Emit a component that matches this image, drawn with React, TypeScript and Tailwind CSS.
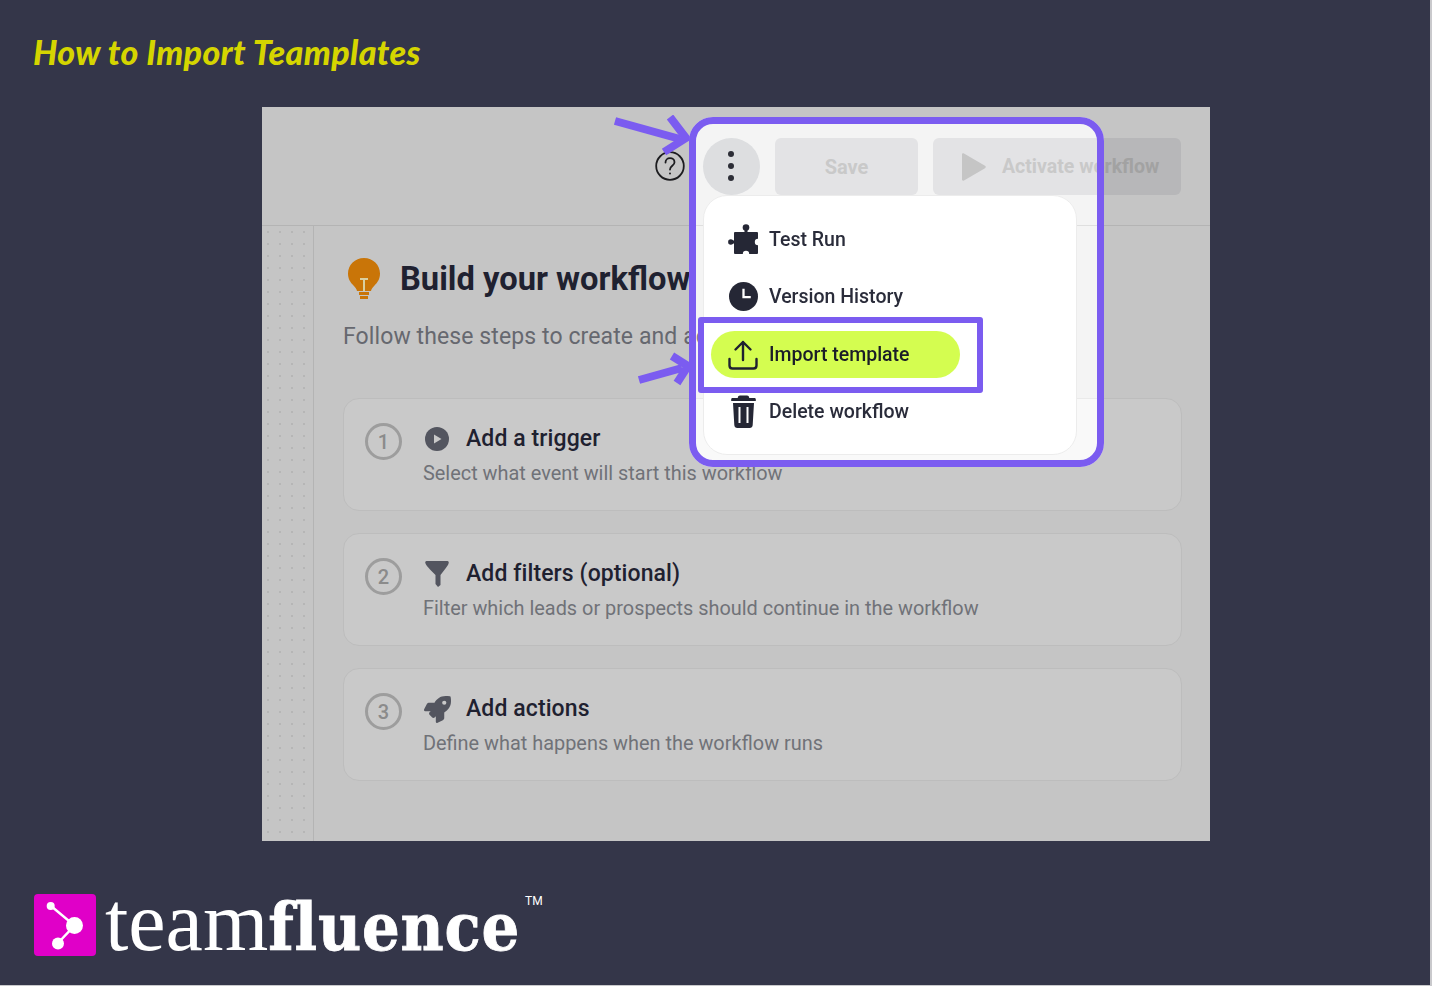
import { FaRocket } from "react-icons/fa";

const steps = [
  { n: 1, title: "Add a trigger", desc: "Select what event will start this workflow", icon: <PlayDot /> },
  { n: 2, title: "Add filters (optional)", desc: "Filter which leads or prospects should continue in the workflow", icon: <Funnel /> },
  { n: 3, title: "Add actions", desc: "Define what happens when the workflow runs", icon: <FaRocket className="ml-[1px] h-[27px] w-[27px] text-[#53555f]" /> },
];

function PlayDot() {
  return (
    <svg viewBox="0 0 24 24" className="ml-[2px] h-[24px] w-[24px]">
      <circle cx="12" cy="12" r="12" fill="#53555f" />
      <path d="M9 7.500v9l7.500-4.500z" fill="#c9c9c9" />
    </svg>
  );
}

function Funnel() {
  return (
    <svg viewBox="0 0 24 26" className="ml-[2px] h-[26px] w-[24px]">
      <path d="M1.500 0h21c1 0 1.500 1 1.200 2-.5 2-1.700 3.500-3.200 5.500l-5 6.500v10l-2.500 2-2.500-3v-9L5 8.500C2.500 5.500 1 4 .3 2 0 1 .5 0 1.500 0z" fill="#53555f" />
    </svg>
  );
}

function Bulb() {
  return (
    <svg viewBox="0 0 32 42" className="mt-[2px] h-[42px] w-[32px]">
      <path d="M16 0C7 0 0 7 0 15.500c0 5.500 2.500 9 5.500 12 2 2 3 3.500 3.500 5.500h14c.5-2 1.500-3.500 3.500-5.500 3-3 5.500-6.500 5.500-12C32 7 25 0 16 0z" fill="#c97508" />
      <path d="M12 21h8M16 21v12" stroke="#d9cfa0" strokeWidth="2" fill="none" />
      <path d="M11 35.500h10M12 39.500h8" stroke="#c97508" strokeWidth="3" fill="none" />
    </svg>
  );
}

function Puzzle() {
  return (
    <svg viewBox="0 0 32 32" className="h-[32px] w-[32px]">
      <rect x="6" y="8" width="24" height="22" rx="1" fill="#252735" />
      <rect x="16.500" y="4" width="3" height="6" fill="#252735" />
      <circle cx="18" cy="3.500" r="3.300" fill="#252735" />
      <rect x="3" y="16.500" width="5" height="3" fill="#252735" />
      <circle cx="2.800" cy="18" r="2.700" fill="#252735" />
      <circle cx="30" cy="18" r="3.200" fill="#fff" />
      <circle cx="18" cy="30" r="3.200" fill="#fff" />
    </svg>
  );
}

function ClockFill() {
  return (
    <svg viewBox="0 0 28 28" className="h-[29px] w-[29px]">
      <circle cx="14" cy="14" r="14" fill="#252735" />
      <path d="M14 6.500V14.500H21" stroke="#fff" strokeWidth="2.200" fill="none" />
    </svg>
  );
}

function UploadIcon() {
  return (
    <svg viewBox="0 0 30 30" className="h-[30px] w-[30px]" fill="none" stroke="#1f2130" strokeWidth="2.400" strokeLinecap="round" strokeLinejoin="round">
      <path d="M15 20V2M7.500 9.500 15 2l7.500 7.500" />
      <path d="M1.500 19v6.500c0 1.700 1.300 3 3 3h21c1.700 0 3-1.300 3-3V19" />
    </svg>
  );
}

function Trash() {
  return (
    <svg viewBox="0 0 25 33" className="h-[33px] w-[25px]">
      <path d="M9 .5h7c1.300 0 2 .8 2.300 2.500h5.200c.8 0 1.300.6 1.300 1.300V6H.2V4.300C.2 3.600.7 3 1.500 3h5.200C7 1.300 7.700.5 9 .5z" fill="#252735" />
      <path d="M2 8h21l-1.300 22c-.1 1.700-1.300 3-3 3H6.300c-1.700 0-2.900-1.300-3-3z" fill="#252735" />
      <path d="M8.500 12v16M16.500 12v16" stroke="#fff" strokeWidth="2" fill="none" />
    </svg>
  );
}

function TopBar() {
  return (
    <div className="flex h-[119px] items-center justify-end gap-[15px] border-b border-[#b4b4b4] pr-[29px]">
      <svg viewBox="0 0 30 30" className="mr-[3px] h-[30px] w-[30px]" fill="none" stroke="#1c1c1f" strokeWidth="1.800">
        <circle cx="15" cy="15" r="13.800" />
        <path d="M10.500 11.500c0-2.700 2-4.300 4.500-4.300s4.500 1.600 4.500 4c0 3.600-4.500 3.600-4.500 7.300" strokeLinecap="round" />
        <circle cx="15" cy="22.500" r="1" fill="#1c1c1f" stroke="none" />
      </svg>
      <div className="flex h-[57px] w-[57px] flex-col items-center justify-center gap-[6px] rounded-full bg-[#b2b3b5] pr-[1px]">
        <span className="h-[6px] w-[6px] rounded-full bg-[#24252c]" />
        <span className="h-[6px] w-[6px] rounded-full bg-[#24252c]" />
        <span className="h-[6px] w-[6px] rounded-full bg-[#24252c]" />
      </div>
      <div className="flex h-[57px] w-[143px] items-center justify-center rounded-[6px] bg-[#b7b7b9] pt-[2px] text-[20px] font-bold text-[#a2a2a2]">
        Save
      </div>
      <div className="flex h-[57px] w-[248px] items-center gap-[16px] rounded-[6px] bg-[#b7b7b9] pl-[29px] pt-[2px] text-[19.500px] font-bold text-[#a2a2a2]">
        <svg viewBox="0 0 24 28" className="h-[28px] w-[24px]">
          <path d="M0 1.500C0 .5 1 0 2 .6l21 12.200c1 .6 1 1.800 0 2.400L2 27.400c-1 .6-2 .1-2-.9z" fill="#9f9f9f" />
        </svg>
        Activate workflow
      </div>
    </div>
  );
}

function Menu() {
  return (
    <div className="absolute left-[7px] top-[71px] h-[260px] w-[374px] rounded-[24px] border border-[#ececec] bg-white pt-[14px] text-[19.500px] font-medium text-[#2a2c3a]">
      <div className="flex h-[57.500px] items-center pt-[2px]">
        <span className="flex w-[65px] justify-end pr-[9px]"><Puzzle /></span>
        <span>Test Run</span>
      </div>
      <div className="flex h-[57.500px] items-center">
        <span className="flex w-[65px] justify-end pr-[11px]"><ClockFill /></span>
        <span>Version History</span>
      </div>
      <div className="flex h-[57.500px] items-center pl-[7px] pt-[2px]">
        <div className="flex h-[47px] w-[249px] items-center rounded-full bg-[#d4fd50] text-[#1b1d28]">
          <span className="flex w-[58px] justify-end pr-[11px]"><UploadIcon /></span>
          <span>Import template</span>
        </div>
      </div>
      <div className="flex h-[57.500px] items-center">
        <span className="flex w-[65px] justify-end pr-[13px]"><Trash /></span>
        <span>Delete workflow</span>
      </div>
      {/* caja de resaltado */}
      <div className="absolute left-[-6px] top-[121px] h-[76px] w-[285px] rounded-[3px] border-[6px] border-[#7b5cf0]" />
    </div>
  );
}

export default function App() {
  return (
    <div className="h-[986px] w-[1432px] overflow-hidden bg-[#c9c9cc]">
      <div className="h-[985px] w-[1430px] overflow-hidden bg-[#343649] font-['Roboto',sans-serif]">
        <div className="flex h-[107px] items-start pl-[33px] pt-[31px]">
          <h1 className="font-['Lato',sans-serif] text-[34px] font-black italic leading-[42px] tracking-[0.35px] text-[#d5d500]">
            How to Import Teamplates
          </h1>
        </div>

        <div className="relative ml-[262px] h-[734px] w-[948px] bg-[#c5c5c5]">
          <TopBar />
          <div className="flex h-[615px]">
            <div className="w-[52px] border-r border-[#b4b4b4] bg-[radial-gradient(#b6b6b6_0.8px,transparent_1px)] bg-[size:12px_12px]" />
            <div className="flex-1 pl-[29px] pr-[28px] pt-[31px]">
              <div className="flex h-[42px] items-center gap-[20px] pl-[5px]">
                <Bulb />
                <h2 className="whitespace-nowrap pt-[3px] text-[32.700px] font-bold text-[#1f2130]">Build your workflow</h2>
              </div>
              <p className="mt-[23px] whitespace-nowrap text-[23px] leading-[30px] tracking-[0.1px] text-[#66686f]">
                Follow these steps to create and activate it
              </p>
              <div className="mt-[46px] flex flex-col gap-[22px]">
                {steps.map((s) => (
                  <div key={s.n} className="flex h-[113px] items-start gap-[21px] rounded-[16px] border border-[#bdbdbd] bg-[#c9c9c9] pl-[21px] pt-[25px]">
                    <div className="-mt-[1px] flex h-[37px] w-[37px] items-center justify-center rounded-full border-[3px] border-[#9d9d9d] text-[20px] font-medium text-[#8b8b8b]">
                      {s.n}
                    </div>
                    <div>
                      <div className="flex h-[30px] items-center">
                        <span className="flex w-[43px] justify-start">{s.icon}</span>
                        <span className="text-[23px] font-medium tracking-[0.1px] text-[#1f2130]">{s.title}</span>
                      </div>
                      <p className="mt-[7px] text-[19.900px] leading-[26px] text-[#707278]">{s.desc}</p>
                    </div>
                  </div>
                ))}
              </div>
            </div>
          </div>

          {/* flechas */}
          <svg viewBox="0 0 80 45" className="absolute left-[352px] top-[8px] h-[45px] w-[80px]" fill="none" stroke="#7b5cf0" strokeWidth="8">
            <path d="M1 6 66 24" />
            <path d="M56 2 72 23 50 37" />
          </svg>
          <svg viewBox="0 0 60 36" className="absolute left-[376px] top-[243px] h-[36px] w-[60px]" fill="none" stroke="#7b5cf0" strokeWidth="8">
            <path d="M1 30 44 18" />
            <path d="M34 6 50 16 39 33" />
          </svg>

          {/* marco: aclara lo que queda debajo */}
          <div className="absolute left-[427px] top-[10px] h-[350px] w-[415px] rounded-[24px] border-[7px] border-[#7b5cf0] backdrop-brightness-[1.24]">
            <Menu />
          </div>
        </div>

        <div className="flex h-[144px] items-start pl-[34px] pt-[53px]">
          <svg viewBox="0 0 62 62" className="h-[62px] w-[62px]">
            <rect width="62" height="62" rx="4" fill="#e000c8" />
            <path d="M17 12 40.500 31.500 24 49" stroke="#fff" strokeWidth="2.500" fill="none" />
            <circle cx="40.500" cy="31.500" r="8.500" fill="#fff" />
            <circle cx="16.700" cy="12" r="4" fill="#fff" />
            <circle cx="24" cy="49.500" r="6" fill="#fff" />
          </svg>
          <div className="-mt-[3px] ml-[9px] flex items-baseline whitespace-nowrap font-['DejaVu_Serif',serif] text-[66px] leading-[62px] text-white">
            <span className="font-['Liberation_Serif',serif] text-[84px] font-normal">team</span>
            <span className="font-bold tracking-[0.8px] [-webkit-text-stroke:0.8px_white] [font-stretch:condensed]">fluence</span>
            <span className="ml-[5px] mt-[3px] self-start font-['Roboto',sans-serif] text-[12px] leading-[14px]">TM</span>
          </div>
        </div>
      </div>
    </div>
  );
}
